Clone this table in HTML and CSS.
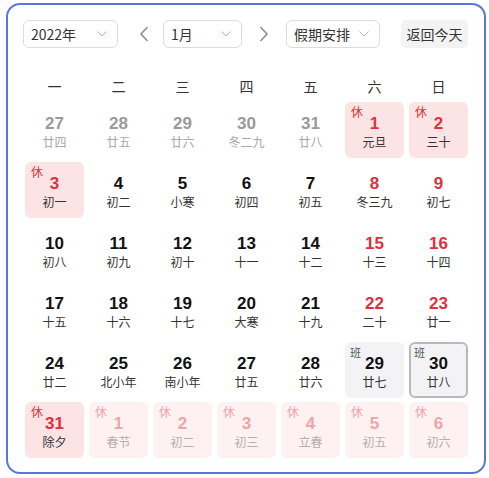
FILE: index.html
```html
<!DOCTYPE html>
<html lang="zh">
<head>
<meta charset="utf-8">
<link rel="stylesheet" href="styles.css">
</head>
<body>
<div class="cal">
  <div class="toolbar">
    <div class="select sel-year"><span>2022年</span><svg class="caret" width="10" height="6" viewBox="0 0 10 6"><path d="M0.5 0.5 L5 5 L9.5 0.5" fill="none" stroke="#b5b5b5" stroke-width="1"/></svg></div>
    <span class="arrow prev"><svg width="10" height="16" viewBox="0 0 10 16"><path d="M8.5 1 L2 8 L8.5 15" fill="none" stroke="#8a8a8a" stroke-width="1.5"/></svg></span>
    <div class="select sel-month"><span>1月</span><svg class="caret" width="10" height="6" viewBox="0 0 10 6"><path d="M0.5 0.5 L5 5 L9.5 0.5" fill="none" stroke="#b5b5b5" stroke-width="1"/></svg></div>
    <span class="arrow next"><svg width="10" height="16" viewBox="0 0 10 16"><path d="M1.5 1 L8 8 L1.5 15" fill="none" stroke="#8a8a8a" stroke-width="1.5"/></svg></span>
    <div class="select sel-holiday"><span>假期安排</span><svg class="caret" width="10" height="6" viewBox="0 0 10 6"><path d="M0.5 0.5 L5 5 L9.5 0.5" fill="none" stroke="#b5b5b5" stroke-width="1"/></svg></div>
    <button class="today">返回今天</button>
  </div>
  <div class="week">
    <span>一</span><span>二</span><span>三</span><span>四</span><span>五</span><span>六</span><span>日</span>
  </div>
  <div class="grid">
    <div class="cell other"><b>27</b><i>廿四</i></div>
    <div class="cell other"><b>28</b><i>廿五</i></div>
    <div class="cell other"><b>29</b><i>廿六</i></div>
    <div class="cell other"><b>30</b><i>冬二九</i></div>
    <div class="cell other"><b>31</b><i>廿八</i></div>
    <div class="cell rest"><em>休</em><b>1</b><i>元旦</i></div>
    <div class="cell rest"><em>休</em><b>2</b><i>三十</i></div>

    <div class="cell rest"><em>休</em><b>3</b><i>初一</i></div>
    <div class="cell"><b>4</b><i>初二</i></div>
    <div class="cell"><b>5</b><i>小寒</i></div>
    <div class="cell"><b>6</b><i>初四</i></div>
    <div class="cell"><b>7</b><i>初五</i></div>
    <div class="cell weekend"><b>8</b><i>冬三九</i></div>
    <div class="cell weekend"><b>9</b><i>初七</i></div>

    <div class="cell"><b>10</b><i>初八</i></div>
    <div class="cell"><b>11</b><i>初九</i></div>
    <div class="cell"><b>12</b><i>初十</i></div>
    <div class="cell"><b>13</b><i>十一</i></div>
    <div class="cell"><b>14</b><i>十二</i></div>
    <div class="cell weekend"><b>15</b><i>十三</i></div>
    <div class="cell weekend"><b>16</b><i>十四</i></div>

    <div class="cell"><b>17</b><i>十五</i></div>
    <div class="cell"><b>18</b><i>十六</i></div>
    <div class="cell"><b>19</b><i>十七</i></div>
    <div class="cell"><b>20</b><i>大寒</i></div>
    <div class="cell"><b>21</b><i>十九</i></div>
    <div class="cell weekend"><b>22</b><i>二十</i></div>
    <div class="cell weekend"><b>23</b><i>廿一</i></div>

    <div class="cell"><b>24</b><i>廿二</i></div>
    <div class="cell"><b>25</b><i>北小年</i></div>
    <div class="cell"><b>26</b><i>南小年</i></div>
    <div class="cell"><b>27</b><i>廿五</i></div>
    <div class="cell"><b>28</b><i>廿六</i></div>
    <div class="cell work"><em>班</em><b>29</b><i>廿七</i></div>
    <div class="cell work selected"><em>班</em><b>30</b><i>廿八</i></div>

    <div class="cell rest"><em>休</em><b>31</b><i>除夕</i></div>
    <div class="cell rest faded"><em>休</em><b>1</b><i>春节</i></div>
    <div class="cell rest faded"><em>休</em><b>2</b><i>初二</i></div>
    <div class="cell rest faded"><em>休</em><b>3</b><i>初三</i></div>
    <div class="cell rest faded"><em>休</em><b>4</b><i>立春</i></div>
    <div class="cell rest faded"><em>休</em><b>5</b><i>初五</i></div>
    <div class="cell rest faded"><em>休</em><b>6</b><i>初六</i></div>
  </div>
</div>
</body>
</html>
```

FILE: styles.css
```css
* { box-sizing: border-box; }
html, body { margin: 0; padding: 0; background: #fff; }
body {
  padding: 3px 0 0 6px;
  font-family: "Noto Sans CJK SC", "Liberation Sans", sans-serif;
  color: #222;
}
.cal {
  width: 480px;
  height: 471px;
  border: 2px solid #5a76dc;
  border-radius: 14px;
  padding: 15px 16px 0 17px;
}
.toolbar {
  display: flex;
  align-items: center;
  height: 28px;
  margin-left: -2px;
}
.select {
  height: 28px;
  border: 1px solid #dcdcdc;
  border-radius: 6px;
  display: flex;
  align-items: center;
  justify-content: space-between;
  padding: 0 10px 0 7px;
  font-size: 14px;
  color: #333;
}
.select span { line-height: 26px; }
.sel-year { width: 95px; }
.sel-month { width: 79px; }
.sel-holiday { width: 94px; }
.arrow { display: flex; width: 10px; height: 16px; }
.prev { margin: 0 14px 0 21px; }
.next { margin: 0 17px 0 17px; }
.today {
  margin-left: auto;
  width: 67px;
  height: 28px;
  border: none;
  border-radius: 5px;
  background: #f3f3f3;
  font-family: inherit;
  font-size: 14px;
  color: #333;
  padding: 0;
}
.week {
  display: grid;
  grid-template-columns: repeat(7, 59px);
  column-gap: 5px;
  margin-top: 22px;
  height: 32px;
  line-height: 32px;
  font-size: 14px;
  color: #333;
  text-align: center;
}
.grid {
  display: grid;
  grid-template-columns: repeat(7, 59px);
  grid-auto-rows: 56px;
  column-gap: 5px;
  row-gap: 4px;
}
.cell {
  position: relative;
  border-radius: 6px;
  display: flex;
  flex-direction: column;
  align-items: center;
  padding-top: 12px;
}
.cell b {
  font-family: "Liberation Sans", Arial, sans-serif;
  font-weight: bold;
  font-size: 17px;
  line-height: 20px;
  color: #111;
}
.cell i {
  font-style: normal;
  font-size: 12px;
  line-height: 16px;
  margin-top: 0;
  color: #333;
}
.cell em {
  position: absolute;
  left: 6px;
  top: 3px;
  font-style: normal;
  font-size: 12px;
  line-height: 14px;
  color: #e0303c;
}
.other b { color: #9a9a9a; }
.other i { color: #a8a8a8; }
.weekend b { color: #e0303c; }
.rest { background: #fce4e5; }
.rest b { color: #e0303c; }
.faded { background: #fef1f1; }
.faded b, .faded em { color: #f2a3aa; }
.faded i { color: #b0b0b0; }
.work { background: #f3f3f5; }
.work em { color: #555; font-size: 11px; left: 5px; }
.selected { border: 2px solid #b9b9c2; padding-top: 10px; }
.selected em { left: 3px; top: 1px; }
```
